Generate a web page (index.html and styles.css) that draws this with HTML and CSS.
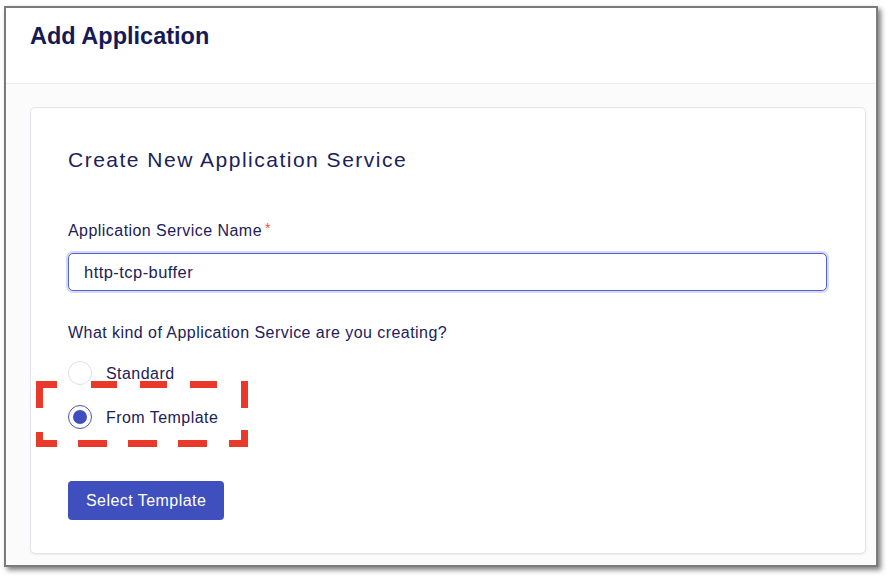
FILE: index.html
```html
<!DOCTYPE html>
<html lang="en">
<head>
<meta charset="utf-8">
<title>Add Application</title>
<link rel="stylesheet" href="styles.css">
</head>
<body>
  <div class="window">
    <header class="win-header">
      <h1 class="page-title">Add Application</h1>
    </header>
    <main class="content">
      <section class="card">
        <h2 class="card-title">Create New Application Service</h2>
        <label class="field-label" for="svc">Application Service Name<span class="req">*</span></label>
        <input id="svc" class="text-input" type="text" value="http-tcp-buffer">
        <p class="question">What kind of Application Service are you creating?</p>
        <div class="radios">
          <label class="radio"><span class="circle"></span><span class="radio-text">Standard</span></label>
          <label class="radio"><span class="circle checked"></span><span class="radio-text">From Template</span></label>
        </div>
        <button class="btn" type="button">Select Template</button>
      </section>
    </main>
  </div>
  <svg class="highlight" width="212" height="66" viewBox="0 0 212 66" aria-hidden="true">
    <g fill="#e8392b">
      <rect x="0" y="0" width="21" height="7"/>
      <rect x="55" y="0" width="26" height="7"/>
      <rect x="104" y="0" width="27" height="7"/>
      <rect x="154" y="0" width="27" height="7"/>
      <rect x="205" y="0" width="7" height="7"/>
      <rect x="0" y="59" width="21" height="7"/>
      <rect x="42" y="59" width="29" height="7"/>
      <rect x="92" y="59" width="29" height="7"/>
      <rect x="142" y="59" width="29" height="7"/>
      <rect x="193" y="59" width="19" height="7"/>
      <rect x="0" y="0" width="7" height="27"/>
      <rect x="0" y="51" width="7" height="15"/>
      <rect x="205" y="0" width="7" height="27"/>
      <rect x="205" y="49" width="7" height="17"/>
    </g>
  </svg>
</body>
</html>
```

FILE: styles.css
```css
* { box-sizing: border-box; }

html, body {
  margin: 0;
  padding: 0;
  background: #ffffff;
}

body {
  position: relative;
  width: 890px;
  height: 576px;
  overflow: hidden;
  font-family: "Liberation Sans", Arial, Helvetica, sans-serif;
  color: #1c2159;
}

.window {
  margin: 6px 0 0 4px;
  width: 874px;
  height: 561px;
  border: 2px solid #7b7b7b;
  box-shadow: 3px 3px 5px rgba(0, 0, 0, 0.5);
  display: flex;
  flex-direction: column;
  background: #ffffff;
}

.win-header {
  height: 76px;
  flex: 0 0 76px;
  border-bottom: 1px solid #ebecf0;
  padding: 14px 24px 0;
  background: #ffffff;
}

.page-title {
  margin: 0;
  font-size: 23.5px;
  line-height: 28px;
  font-weight: 700;
  color: #151a56;
  letter-spacing: 0;
}

.content {
  flex: 1;
  background: #fbfbfc;
  padding: 23px 10px 0 24px;
}

.card {
  width: 836px;
  background: #ffffff;
  border: 1px solid #e3e5eb;
  border-radius: 5px;
  box-shadow: 0 1px 2px rgba(20, 25, 80, 0.06);
  padding: 40px 38px 33px 37px;
  display: flex;
  flex-direction: column;
  align-items: flex-start;
}

.card-title {
  margin: 0;
  font-size: 21px;
  line-height: 24px;
  font-weight: 400;
  letter-spacing: 1.5px;
  color: #1c2159;
}

.field-label {
  margin-top: 46px;
  font-size: 16px;
  line-height: 20px;
  letter-spacing: 0.45px;
  color: #1c2159;
}

.req {
  color: #e2574c;
  font-size: 14px;
  margin-left: 3px;
  vertical-align: 3px;
}

.text-input {
  margin-top: 12px;
  width: 100%;
  height: 38px;
  border: 1px solid #5563c9;
  border-radius: 5px;
  box-shadow: 0 0 0 2px #d6d9f5;
  padding: 0 15px;
  font-family: inherit;
  font-size: 16.5px;
  letter-spacing: 0.45px;
  color: #1c2159;
  background: #ffffff;
  outline: none;
}

.question {
  margin: 32px 0 0;
  font-size: 16px;
  line-height: 20px;
  letter-spacing: 0.45px;
  color: #1c2159;
}

.radios {
  margin-top: 18px;
  display: flex;
  flex-direction: column;
  gap: 20px;
}

.radio {
  display: flex;
  align-items: center;
  gap: 14px;
  height: 24px;
  font-size: 16px;
  letter-spacing: 0.45px;
  color: #1c2159;
}

.radio-text {
  position: relative;
  top: 1px;
}

.circle {
  width: 24px;
  height: 24px;
  border-radius: 50%;
  border: 1px solid #dedfe6;
  background: #ffffff;
  display: flex;
  align-items: center;
  justify-content: center;
}

.circle.checked {
  border-color: #4453c2;
}

.circle.checked::after {
  content: "";
  width: 14px;
  height: 14px;
  border-radius: 50%;
  background: #3f4fbf;
}

.btn {
  margin-top: 52px;
  height: 39px;
  padding: 0 18px;
  border: none;
  border-radius: 4px;
  background: #3f4fbe;
  color: #ffffff;
  font-family: inherit;
  font-size: 16px;
  letter-spacing: 0.45px;
}

.highlight {
  position: absolute;
  left: 36px;
  top: 381px;
}
```
